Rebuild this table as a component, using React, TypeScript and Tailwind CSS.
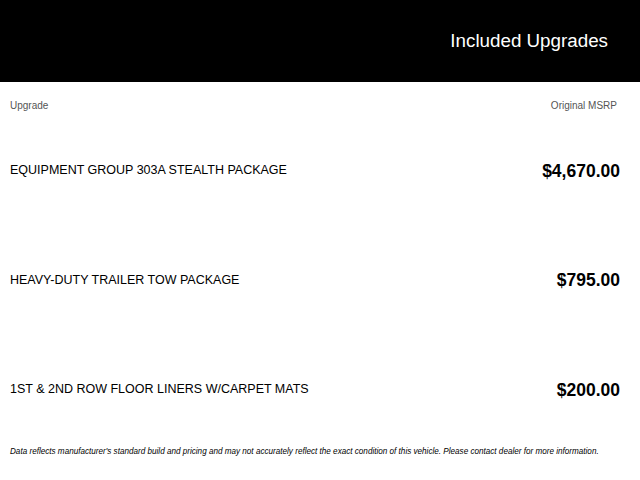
import React from 'react';

interface Upgrade {
  name: string;
  price: string;
}

const upgrades: Upgrade[] = [
  { name: 'EQUIPMENT GROUP 303A STEALTH PACKAGE', price: '$4,670.00' },
  { name: 'HEAVY-DUTY TRAILER TOW PACKAGE', price: '$795.00' },
  { name: '1ST & 2ND ROW FLOOR LINERS W/CARPET MATS', price: '$200.00' },
];

const App: React.FC = () => {
  return (
    <div className="w-[640px] h-[480px] bg-white [font-family:'Liberation_Sans',Arial,sans-serif] text-black overflow-hidden">
      <div className="h-[82px] bg-black flex items-center justify-end pr-[32px]">
        <h1 className="text-[18.8px] text-white leading-none">Included Upgrades</h1>
      </div>

      <div className="flex justify-between items-center pl-[10px] pr-[23px] pt-[18px] text-[10px] text-[#555] leading-[12px]">
        <span>Upgrade</span>
        <span>Original MSRP</span>
      </div>

      <div className="pt-[4px]">
        {upgrades.map((u) => (
          <div key={u.name} className="h-[109.5px] flex items-center justify-between pl-[10px] pr-[20px]">
            <span className="text-[12.5px]">{u.name}</span>
            <span className="text-[17.5px] font-bold">{u.price}</span>
          </div>
        ))}
      </div>

      <p className="px-[10px] pt-[1px] text-[8.15px] italic leading-[12px] whitespace-nowrap">
        Data reflects manufacturer's standard build and pricing and may not accurately reflect the exact condition of this vehicle. Please contact dealer for more information.
      </p>
    </div>
  );
};

export default App;
